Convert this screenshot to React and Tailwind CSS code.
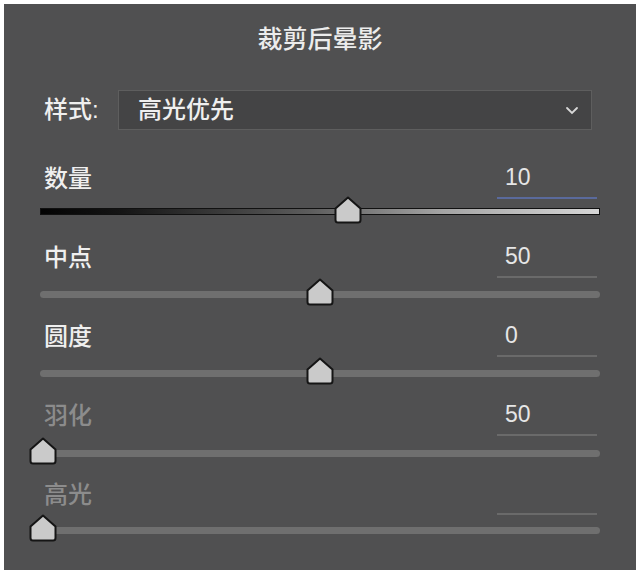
import React from 'react';

const sliders = [
  { label: '数量', value: '10', pos: 0.55, gradient: true, accent: true, gap: 'mt-[9px]' },
  { label: '中点', value: '50', pos: 0.5, gap: 'mt-[13px]' },
  { label: '圆度', value: '0', pos: 0.5, gap: 'mt-[13px]' },
  { label: '羽化', value: '50', pos: 0.005, disabled: true, gap: 'mt-[14px]' },
  { label: '高光', value: '', pos: 0.005, disabled: true, gap: 'mt-[12px]' },
];

// pentagon thumb like the Photoshop sliders
const Thumb = ({ pos }) => (
  <svg
    width="28"
    height="28"
    viewBox="0 0 28 28"
    className="absolute -top-[13px]"
    style={{ left: `calc(${pos * 100}% - 14px)` }}
  >
    <path
      d="M14 1.5 L26.5 12.5 L26.5 24 Q26.5 26.5 24 26.5 L4 26.5 Q1.5 26.5 1.5 24 L1.5 12.5 Z"
      fill="#cacaca"
      stroke="#151515"
      strokeWidth="2"
      strokeLinejoin="round"
    />
  </svg>
);

const SliderRow = ({ label, value, pos, gradient, accent, disabled, gap }) => (
  <div className="h-[79px] flex flex-col">
    <div className="h-[41px] flex justify-between pl-[40px] pr-[39px]">
      <span className={`self-center text-[24px] font-medium ${disabled ? 'text-[#8c8c8c]' : 'text-[#efefef]'}`}>
        {label}
      </span>
      <div
        className={`w-[100px] pl-2 flex items-center border-b-2 text-[23px] text-[#e6e6e6] ${
          accent ? 'border-[#5a6a9c]' : 'border-[#6a6a6a]'
        }`}
      >
        {value}
      </div>
    </div>
    <div
      className={`relative ml-[36px] mr-[36px] h-[7px] ${gap} ${
        gradient
          ? 'border border-[#111] bg-[linear-gradient(to_right,#030303,#141414_14%,#5c5c5c_48%,#a4a4a4_72%,#d6d6d6)]'
          : 'rounded-full bg-[#6f6f6f]'
      }`}
    >
      <Thumb pos={pos} />
    </div>
  </div>
);

export default function App() {
  return (
    <div className="w-[640px] h-[574px] bg-white p-1">
      <div
        className="h-full bg-[#505051] flex flex-col"
        style={{ fontFamily: '"Liberation Sans", "Noto Sans CJK SC", sans-serif' }}
      >
        {/* Title */}
        <div className="h-[72px] flex items-center justify-center text-[25px] font-medium text-[#ececec]">
          裁剪后晕影
        </div>

        {/* Style dropdown */}
        <div className="mt-[14px] h-[40px] flex items-center pl-[40px] pr-[44px]">
          <span className="w-[74px] text-[24px] font-medium text-[#efefef]">样式:</span>
          <div className="flex-1 h-full flex items-center justify-between bg-[#444445] border border-[#5e5e5e] pl-[19px] pr-[12px]">
            <span className="text-[24px] font-medium text-[#efefef]">高光优先</span>
            <svg width="14" height="10" viewBox="0 0 14 10">
              <path d="M2 3 L7 8 L12 3" fill="none" stroke="#d8d8d8" strokeWidth="1.8" strokeLinecap="round" />
            </svg>
          </div>
        </div>

        {/* Sliders */}
        <div className="mt-[28px] flex flex-col">
          {sliders.map((s) => (
            <SliderRow key={s.label} {...s} />
          ))}
        </div>
      </div>
    </div>
  );
}
